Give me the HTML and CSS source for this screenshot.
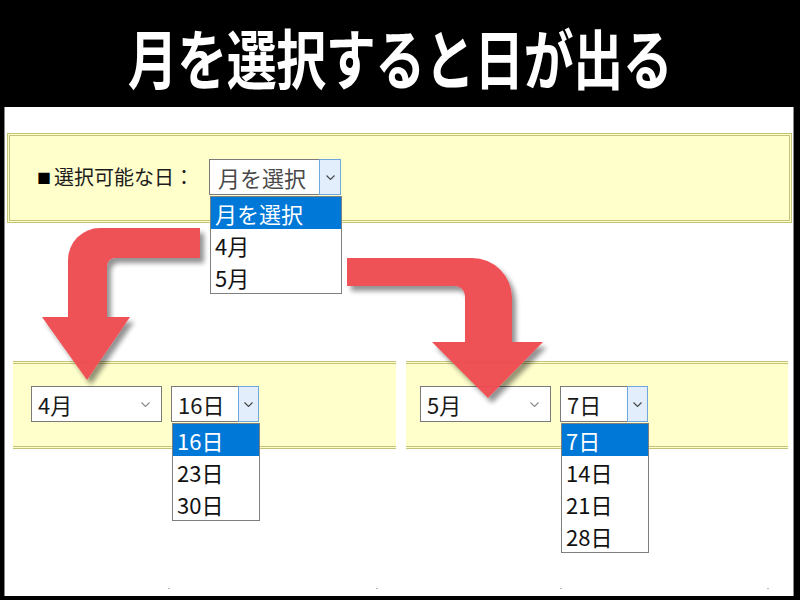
FILE: index.html
```html
<!DOCTYPE html>
<html lang="ja">
<head>
<meta charset="utf-8">
<title>月を選択すると日が出る</title>
<link rel="stylesheet" href="styles.css">
</head>
<body>
<div class="screen">
  <header class="banner">
    <h1 class="banner-title">月を選択すると日が出る</h1>
  </header>

  <main class="sheet">
    <section class="panel panel-top">
      <span class="field-label"><span class="bullet">■</span>選択可能な日：</span>
      <div class="select is-open select-month-pick">
        <span class="select-value muted">月を選択</span>
        <span class="select-btn">
          <svg class="chev" viewBox="0 0 9 5" width="9" height="5"><polyline points="0.5,0.5 4.5,4.5 8.5,0.5"/></svg>
        </span>
        <ul class="listbox">
          <li class="is-active">月を選択</li>
          <li>4月</li>
          <li>5月</li>
        </ul>
      </div>
    </section>

    <div class="strip-row">
      <section class="panel panel-strip strip-april">
        <div class="select select-month">
          <span class="select-value">4月</span>
          <svg class="chev chev-idle" viewBox="0 0 9 5" width="9" height="5"><polyline points="0.5,0.5 4.5,4.5 8.5,0.5"/></svg>
        </div>
        <div class="select is-open select-day">
          <span class="select-value">16日</span>
          <span class="select-btn">
            <svg class="chev" viewBox="0 0 9 5" width="9" height="5"><polyline points="0.5,0.5 4.5,4.5 8.5,0.5"/></svg>
          </span>
          <ul class="listbox">
            <li class="is-active">16日</li>
            <li>23日</li>
            <li>30日</li>
          </ul>
        </div>
      </section>

      <section class="panel panel-strip strip-may">
        <div class="select select-month">
          <span class="select-value">5月</span>
          <svg class="chev chev-idle" viewBox="0 0 9 5" width="9" height="5"><polyline points="0.5,0.5 4.5,4.5 8.5,0.5"/></svg>
        </div>
        <div class="select is-open select-day">
          <span class="select-value">7日</span>
          <span class="select-btn">
            <svg class="chev" viewBox="0 0 9 5" width="9" height="5"><polyline points="0.5,0.5 4.5,4.5 8.5,0.5"/></svg>
          </span>
          <ul class="listbox">
            <li class="is-active">7日</li>
            <li>14日</li>
            <li>21日</li>
            <li>28日</li>
          </ul>
        </div>
      </section>
    </div>

    <div class="ticks"><i></i><i></i><i></i><i></i></div>
  </main>

  <!-- bent arrows laid over the panels -->
  <svg class="arrows" viewBox="0 0 800 600" width="800" height="600">
    <defs>
      <filter id="arrow-shadow" x="-20%" y="-20%" width="140%" height="140%">
        <feDropShadow dx="4" dy="5" stdDeviation="2.5" flood-color="#000" flood-opacity="0.45"/>
      </filter>
    </defs>
    <g class="arrow" filter="url(#arrow-shadow)">
      <path d="M200 228 L100 228 A32 32 0 0 0 68 260 L68 317 L42 317 L87 380 L130 317 L107 317 L107 266 A8 8 0 0 1 115 258 L200 258 Z"/>
    </g>
    <g class="arrow" filter="url(#arrow-shadow)">
      <path d="M347 258 L472 258 A40 40 0 0 1 512 298 L512 342 L543 342 L488 398 L432 342 L465 342 L465 296 A10 10 0 0 0 455 286 L347 286 Z"/>
    </g>
  </svg>
</div>
</body>
</html>
```

FILE: styles.css
```css
* {
  box-sizing: border-box;
}

html,
body {
  margin: 0;
  padding: 0;
  background: #000;
}

body {
  font-family: "Noto Sans CJK JP", "Noto Sans", sans-serif;
}

.screen {
  position: relative;
  width: 800px;
  height: 600px;
  overflow: hidden;
  background: #000;
}

/* ---- black title band ---- */
.banner {
  height: 107px;
  display: flex;
  align-items: center;
  justify-content: center;
}

.banner-title {
  margin: 0;
  display: inline-block;
  color: #fff;
  font-size: 50px;
  font-weight: 700;
  line-height: 1;
  letter-spacing: -0.5px;
  transform: scaleY(1.3);
  transform-origin: center;
  padding-top: 2px;
}

/* ---- white sheet ---- */
.sheet {
  margin: 0 6px 0 4px;
  height: 489px;
  background: #fff;
  border-left: 1px solid #8a8a8a;
  border-right: 1px solid #8a8a8a;
  display: flex;
  flex-direction: column;
}

.panel {
  background: #ffffcc;
  border-color: #c3c37a;
  border-style: double;
  border-width: 0;
}

.panel-top {
  margin: 26px 1px 0 2px;
  height: 90px;
  border-width: 3px;
  padding: 23px 0 0 27px;
  display: flex;
  align-items: flex-start;
  gap: 15px;
}

.field-label {
  display: flex;
  align-items: center;
  font-size: 20px;
  line-height: 36px;
  color: #1c1c1c;
}

.bullet {
  font-size: 14px;
  margin-right: 3px;
  color: #000;
}

.strip-row {
  margin-top: 138px;
  padding-left: 8px;
  display: flex;
  gap: 10px;
}

.panel-strip {
  height: 88px;
  border-top-width: 3px;
  border-bottom-width: 3px;
  padding-top: 22px;
  display: flex;
  align-items: flex-start;
  gap: 9px;
}

.strip-april {
  width: 383px;
  padding-left: 18px;
}

.strip-may {
  width: 382px;
  padding-left: 14px;
}

/* ---- select boxes ---- */
.select {
  position: relative;
  height: 36px;
  display: flex;
  align-items: stretch;
  background: #fff;
  font-size: 22px;
  color: #1a1a1a;
}

.select-value {
  flex: 1;
  display: flex;
  align-items: center;
  padding-left: 6px;
  line-height: 1;
  white-space: nowrap;
}

.select-value.muted {
  color: #4a4a4a;
  padding-left: 8px;
}

.select-month {
  width: 131px;
  border: 1px solid #7a7a7a;
  align-items: center;
}

.select-month .select-value {
  align-self: stretch;
}

.chev {
  display: block;
  fill: none;
  stroke: #444;
  stroke-width: 1.1;
}

.chev-idle {
  stroke: #8a8a8a;
  margin-right: 11px;
}

.is-open .select-value {
  border: 1px solid #7a7a7a;
  border-right: 0;
}

.select-btn {
  width: 21px;
  background: #e2eefb;
  border: 1px solid #6ea6dd;
  display: flex;
  align-items: center;
  justify-content: center;
}

.select-month-pick {
  width: 132px;
}

.select-month-pick .select-btn {
  width: 22px;
}

.select-day {
  width: 88px;
}

/* ---- opened option lists ---- */
.listbox {
  position: absolute;
  top: 100%;
  left: 1px;
  right: -1px;
  margin: 1px 0 0;
  padding: 0;
  list-style: none;
  background: #fff;
  border: 1px solid #7f7f7f;
  z-index: 2;
}

.listbox li {
  height: 32px;
  line-height: 32px;
  padding-left: 4px;
  color: #111;
  white-space: nowrap;
}

.listbox li.is-active {
  background: #0078d7;
  color: #fff;
}

/* ---- faint ruler ticks along the bottom ---- */
.ticks {
  margin-top: auto;
  margin-bottom: 7px;
  height: 1px;
  display: flex;
  padding-left: 163px;
}

.ticks i {
  display: block;
  width: 2px;
  height: 1px;
  background: #b5b5b5;
}

.ticks i:nth-child(2) {
  margin-left: 206px;
}

.ticks i:nth-child(3) {
  margin-left: 182px;
}

.ticks i:nth-child(4) {
  margin-left: 205px;
}

/* ---- arrows ---- */
.arrows {
  position: absolute;
  top: 0;
  left: 0;
  pointer-events: none;
  z-index: 5;
}

.arrow {
  fill: #ee4850;
  opacity: 0.95;
}
```
